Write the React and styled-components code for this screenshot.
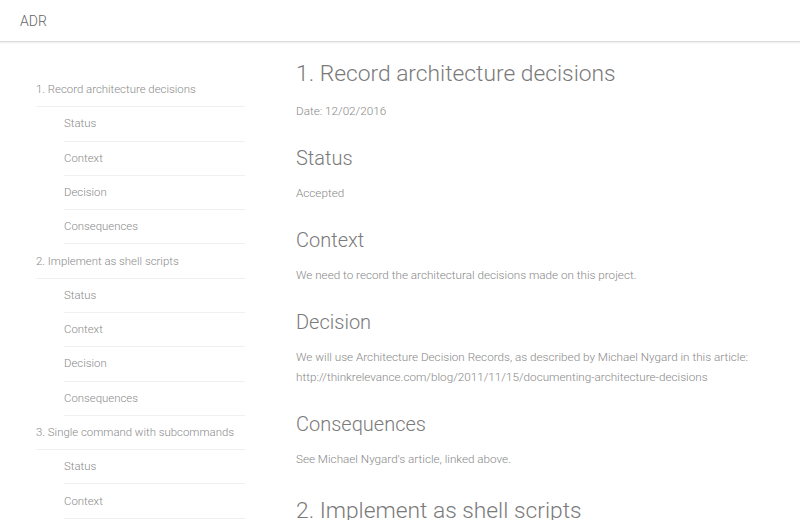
import React from 'react'
import styled, { createGlobalStyle } from 'styled-components'

const GlobalStyle = createGlobalStyle`
  html, body {
    margin: 0;
    padding: 0;
    background: #fff;
  }
  body {
    font-family: Roboto, "Helvetica Neue", "Liberation Sans", sans-serif;
    font-weight: 300;
    color: #777;
    overflow: hidden;
  }
`

const Page = styled.div`
  width: 800px;
  height: 520px;
  overflow: hidden;
`

const Header = styled.header`
  height: 41px;
  display: flex;
  align-items: center;
  padding: 0 20px;
  border-bottom: 1px solid #dcdcdc;
  box-shadow: 0 1px 2px rgba(0, 0, 0, 0.08);
  font-size: 14px;
  color: #666;
`

const Body = styled.div`
  display: flex;
`

const Sidebar = styled.nav`
  width: 209px;
  flex-shrink: 0;
  padding: 31px 0 0 36px;
`

const NavList = styled.ul`
  list-style: none;
  margin: 0;
  padding: 0;
`

const NavItem = styled.li`
  margin-left: ${p => (p.sub ? '28px' : '0')};
  padding: 8.15px 0;
  line-height: 17px;
  font-size: 11.4px;
  color: #8a8a8a;
  border-bottom: 1px solid #f0f0f0;
  white-space: nowrap;
`

const Main = styled.main`
  flex: 1;
  padding: 17px 20px 0 51px;
`

const Title = styled.h1`
  margin: ${p => (p.next ? '27px' : '0')} 0 12px;
  font-size: 22.8px;
  font-weight: 300;
  line-height: 30px;
  color: #7a7a7a;
  white-space: nowrap;
`

const Section = styled.h2`
  margin: 25px 0 13px;
  font-size: 20px;
  font-weight: 300;
  line-height: 24px;
  color: #7a7a7a;
`

const Text = styled.p`
  margin: 0;
  font-size: 11.7px;
  line-height: 20px;
  color: #888;
`

const records = [
  '1. Record architecture decisions',
  '2. Implement as shell scripts',
  '3. Single command with subcommands',
]

const sections = ['Status', 'Context', 'Decision', 'Consequences']

const App = () => (
  <Page>
    <GlobalStyle />
    <Header>ADR</Header>
    <Body>
      <Sidebar>
        <NavList>
          {records.map(title => (
            <React.Fragment key={title}>
              <NavItem>{title}</NavItem>
              {sections.map(s => (
                <NavItem sub key={title + s}>{s}</NavItem>
              ))}
            </React.Fragment>
          ))}
        </NavList>
      </Sidebar>
      <Main>
        <Title>1. Record architecture decisions</Title>
        <Text>Date: 12/02/2016</Text>
        <Section>Status</Section>
        <Text>Accepted</Text>
        <Section>Context</Section>
        <Text>We need to record the architectural decisions made on this project.</Text>
        <Section>Decision</Section>
        <Text>
          We will use Architecture Decision Records, as described by Michael Nygard in this article:
          <br />
          http://thinkrelevance.com/blog/2011/11/15/documenting-architecture-decisions
        </Text>
        <Section>Consequences</Section>
        <Text>See Michael Nygard's article, linked above.</Text>
        <Title next>2. Implement as shell scripts</Title>
      </Main>
    </Body>
  </Page>
)

export default App
